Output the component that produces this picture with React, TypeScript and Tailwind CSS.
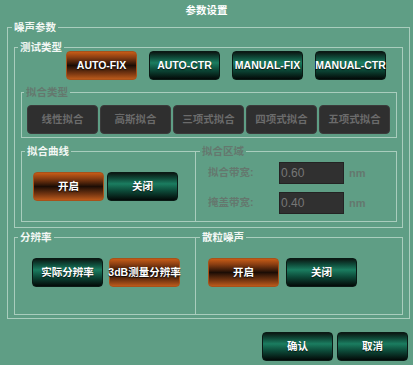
import type { ReactNode } from "react";

const orange =
  "bg-[linear-gradient(to_bottom,#c65c17_0%,#8a3e12_20%,#1c0d05_50%,#7a3812_80%,#bb5a1b_100%)] border border-[#a8521a]";
const teal =
  "bg-[linear-gradient(to_bottom,#0b1713_0%,#0f4a39_20%,#1b7d60_40%,#0d4c3a_65%,#030a08_100%)] border border-[#0a1a15]";

const dimText = "text-[#64786e]";

const Btn = ({ label, on }: { label: string; on?: boolean }) => (
  <button
    className={`flex h-[29px] w-[71px] items-center justify-center whitespace-nowrap rounded-[4px] text-[10.5px] font-bold text-white [text-shadow:0_1px_1px_rgba(0,0,0,0.8)] ${on ? orange : teal}`}
  >
    {label}
  </button>
);

const Group = ({
  title,
  dim,
  legendClass = "ml-[3px]",
  className = "",
  bodyClass = "",
  children,
}: {
  title: string;
  dim?: boolean;
  legendClass?: string;
  className?: string;
  bodyClass?: string;
  children: ReactNode;
}) => (
  <fieldset className={`border border-[#a9cdbd] ${className}`}>
    <legend
      className={`px-[2px] text-[10.5px] font-bold leading-[13px] ${dim ? dimText : "text-[#f2f7f4]"} ${legendClass}`}
    >
      {title}
    </legend>
    <div className={bodyClass}>{children}</div>
  </fieldset>
);

const fitTypes = ["线性拟合", "高斯拟合", "三项式拟合", "四项式拟合", "五项式拟合"];

export default function App() {
  return (
    <div
      className="h-[365px] w-[413px] overflow-hidden bg-[#5f9e85]"
      style={{ fontFamily: '"Liberation Sans", "Noto Sans CJK SC", sans-serif' }}
    >
      {/* title */}
      <div className="pt-[3px] text-center text-[10.5px] font-bold leading-[14px] text-white">参数设置</div>

      {/* 噪声参数 */}
      <Group title="噪声参数" legendClass="ml-[4px]" className="ml-[7px] mt-[4px] w-[403px]" bodyClass="pb-[3px]">
        <Group title="测试类型" className="ml-[6px] mt-[7px] w-[389px]" bodyClass="pb-[5px]">
          <div className="-mt-[3px] ml-[51px] flex gap-[12px]">
            <Btn label="AUTO-FIX" on />
            <Btn label="AUTO-CTR" />
            <Btn label="MANUAL-FIX" />
            <Btn label="MANUAL-CTR" />
          </div>

          {/* 拟合类型 (disabled) */}
          <Group
            title="拟合类型"
            dim
            legendClass="ml-[2px]"
            className="ml-[6px] mt-[6px] w-[376px]"
            bodyClass="flex gap-[2px] pb-[3px] pl-[5px] pt-[6px]"
          >
            {fitTypes.map((t) => (
              <div
                key={t}
                className="flex h-[29px] w-[71px] items-center justify-center whitespace-nowrap rounded-[4px] border border-[#3b3b3b] bg-[#2f2f2f] text-[10.5px] font-bold text-[#6b6b6b]"
              >
                {t}
              </div>
            ))}
          </Group>

          <div className="ml-[6px] mt-[7px] flex items-stretch">
            <Group title="拟合曲线" className="w-[175px]" bodyClass="flex gap-[3px] pb-[20px] pl-[11px] pt-[14px]">
              <Btn label="开启" on />
              <Btn label="关闭" />
            </Group>
            <Group
              title="拟合区域"
              dim
              legendClass="ml-[4px]"
              className="-ml-px w-[202px]"
              bodyClass="flex flex-col gap-[8px] pl-[12px] pt-[4px]"
            >
              {[
                ["拟合带宽:", "0.60"],
                ["掩盖带宽:", "0.40"],
              ].map(([k, v]) => (
                <div key={k} className="flex items-center">
                  <span className={`w-[71px] text-[10.5px] font-bold ${dimText}`}>{k}</span>
                  <div className="flex h-[22px] w-[65px] items-center border border-[#232323] bg-[#303030] pl-[1px] text-[12px] text-[#777]">
                    {v}
                  </div>
                  <span className={`ml-[5px] text-[11px] font-bold ${dimText}`}>nm</span>
                </div>
              ))}
            </Group>
          </div>
        </Group>

        <div className="ml-[6px] mt-[3px] flex items-stretch">
          <Group title="分辨率" className="w-[182px]" bodyClass="flex gap-[6px] pb-[27px] pl-[17px] pt-[14px]">
            <Btn label="实际分辨率" />
            <Btn label="3dB测量分辨率" on />
          </Group>
          <Group
            title="散粒噪声"
            legendClass="ml-[4px]"
            className="-ml-px w-[208px]"
            bodyClass="flex gap-[7px] pl-[12px] pt-[14px]"
          >
            <Btn label="开启" on />
            <Btn label="关闭" />
          </Group>
        </div>
      </Group>

      {/* footer */}
      <div className="mt-[13px] flex justify-end gap-[4px] pr-[5px]">
        <Btn label="确认" />
        <Btn label="取消" />
      </div>
    </div>
  );
}
